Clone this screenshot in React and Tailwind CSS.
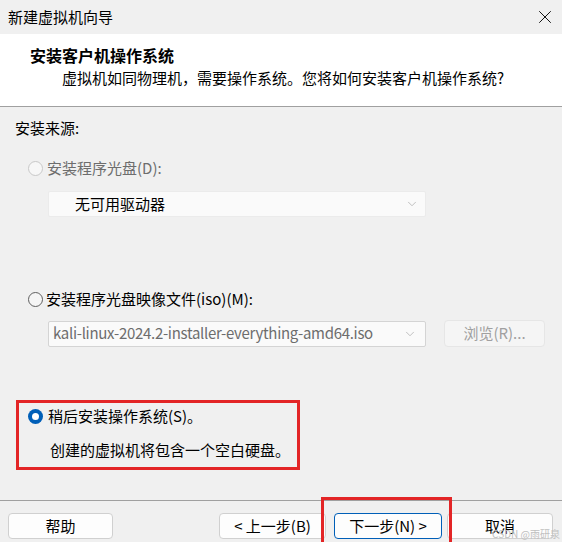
import React from "react";
import { ChevronDown, X } from "lucide-react";

const font = {
  fontFamily: '"Noto Sans CJK SC", "Noto Sans", sans-serif',
};

const Radio = ({ state }) => {
  if (state === "checked") {
    return (
      <span className="w-[15px] h-[15px] rounded-full bg-[#005fb8] flex items-center justify-center shrink-0">
        <span className="w-[7px] h-[7px] rounded-full bg-white" />
      </span>
    );
  }
  if (state === "disabled") {
    return (
      <span className="w-[15px] h-[15px] rounded-full border border-[#c8c8c8] bg-[#f7f7f7] shrink-0" />
    );
  }
  return (
    <span className="w-[15px] h-[15px] rounded-full border border-[#5f5f5f] bg-[#f5f5f5] shrink-0" />
  );
};

const Button = ({ children, primary, className = "" }) => (
  <div
    className={`h-[26px] flex items-center justify-center rounded-[4px] bg-[#fdfdfd] text-[15px] text-black ${
      primary ? "border border-[#005fb8]" : "border border-[#d0d0d0]"
    } ${className}`}
  >
    {children}
  </div>
);

export default function App() {
  return (
    <div
      className="w-[562px] h-[542px] bg-[#f0f0f0] flex flex-col overflow-hidden relative"
      style={font}
    >
      {/* title bar */}
      <div className="h-[34px] shrink-0 bg-[#f0f0f0] flex items-center justify-between pl-[8px] pr-[6px]">
        <span className="text-[15px] leading-[20px] text-black">新建虚拟机向导</span>
        <X size={22} strokeWidth={1} className="text-black" />
      </div>

      {/* header */}
      <div className="h-[73px] shrink-0 bg-white border-b border-[#a0a0a0] flex flex-col pt-[10px]">
        <div className="pl-[30px] text-[16px] leading-[22px] font-bold text-black">
          安装客户机操作系统
        </div>
        <div className="pl-[62px] mt-[1px] text-[15px] leading-[22px] text-black">
          虚拟机如同物理机，需要操作系统。您将如何安装客户机操作系统?
        </div>
      </div>

      {/* body */}
      <div className="flex-1 flex flex-col pt-[11px] pl-[15px]">
        <div className="text-[15px] leading-[20px] text-black">安装来源:</div>

        <div className="mt-[20px] ml-[13px] flex items-center gap-[4px] h-[20px]">
          <Radio state="disabled" />
          <span className="text-[15px] leading-[20px] text-[#6d6d6d]">安装程序光盘(D):</span>
        </div>

        <div className="mt-[13px] ml-[33px] w-[378px] h-[26px] bg-[#fafafa] border border-[#ebebeb] rounded-[2px] flex items-center justify-between pl-[26px] pr-[6px]">
          <span className="text-[15px] text-black">无可用驱动器</span>
          <ChevronDown size={14} strokeWidth={1.2} className="text-[#a8a8a8]" />
        </div>

        <div className="mt-[72px] ml-[13px] flex items-center gap-[3px] h-[20px]">
          <Radio state="unchecked" />
          <span className="text-[15px] leading-[20px] text-black">安装程序光盘映像文件(iso)(M):</span>
        </div>

        <div className="mt-[11px] ml-[33px] flex items-center gap-[18px]">
          <div className="w-[378px] h-[26px] bg-[#fafafa] border border-[#d4d4d4] rounded-[2px] flex items-center justify-between pl-[4px] pr-[8px]">
            <span className="text-[15px] text-[#6d6d6d] tracking-[-0.3px]">
              kali-linux-2024.2-installer-everything-amd64.iso
            </span>
            <ChevronDown size={14} strokeWidth={1.2} className="text-[#a8a8a8]" />
          </div>
          <div className="w-[101px] h-[27px] bg-[#f5f5f5] border border-[#e6e6e6] rounded-[4px] flex items-center justify-center text-[15px] text-[#a0a0a0]">
            浏览(R)...
          </div>
        </div>

        <div className="mt-[53px] ml-[1px] w-[284px] h-[70px] border-[3px] border-[#e32526] flex flex-col pt-[3px] pl-[9px]">
          <div className="flex items-center gap-[5px] h-[20px]">
            <Radio state="checked" />
            <span className="text-[15px] leading-[20px] text-black">稍后安装操作系统(S)。</span>
          </div>
          <div className="mt-[14px] pl-[22px] text-[15px] leading-[20px] text-black">
            创建的虚拟机将包含一个空白硬盘。
          </div>
        </div>
      </div>

      {/* footer */}
      <div className="h-[42px] shrink-0 border-t border-[#a0a0a0] flex items-start pt-[12px] pl-[8px] relative">
        <Button className="w-[105px]">帮助</Button>
        <Button className="w-[107px] ml-[106px]">&lt; 上一步(B)</Button>
        <Button primary className="w-[108px] ml-[8px]">下一步(N) &gt;</Button>
        <Button className="w-[106px] ml-[5px]">取消</Button>

        <div className="absolute left-[321px] top-[-4px] w-[131px] h-[50px] border-[3px] border-[#e32526]" />
        <div className="absolute right-[2px] bottom-[2px] text-[10px] text-[#c0c0c0] leading-[12px]">
          CSDN @雨研泉
        </div>
      </div>
    </div>
  );
}
